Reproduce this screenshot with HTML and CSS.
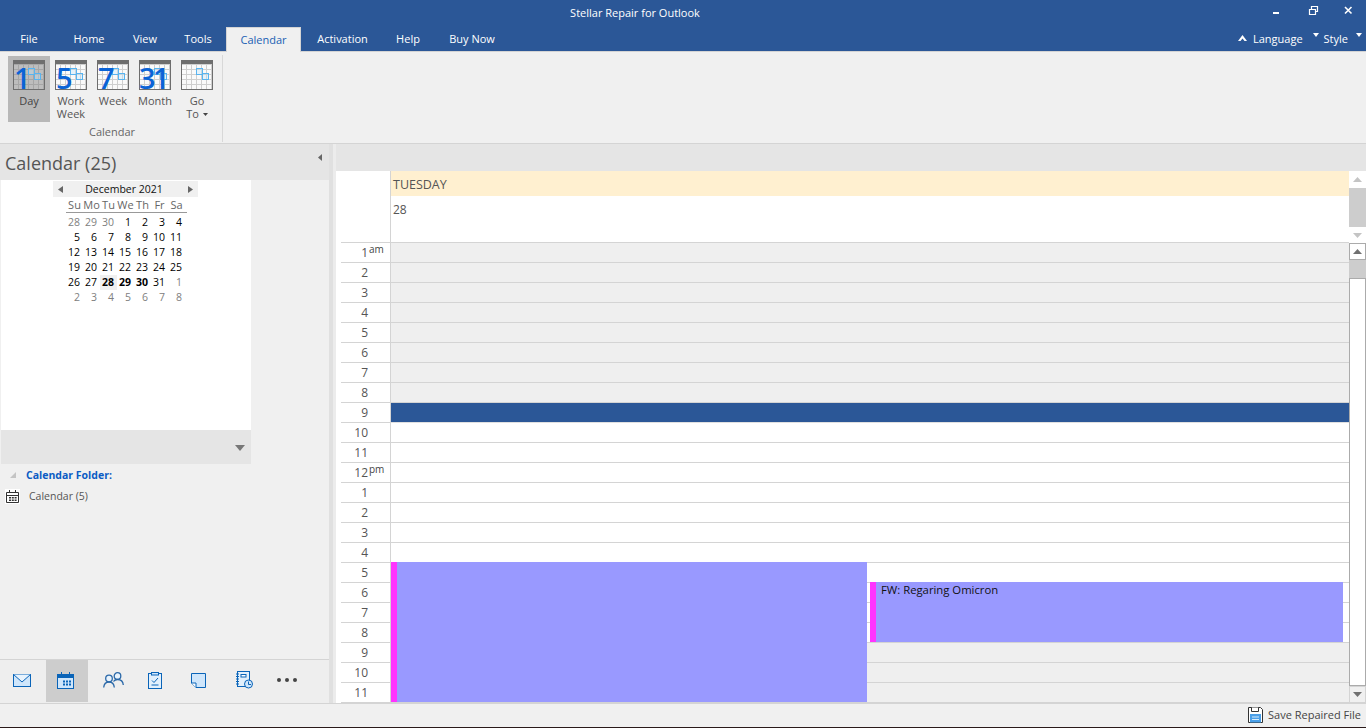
FILE: index.html
```html
<!DOCTYPE html>
<html lang="en">
<head>
<meta charset="utf-8">
<title>Stellar Repair for Outlook</title>
<link rel="stylesheet" href="styles.css">
</head>
<body>
<div class="app">
  <header class="chrome">
    <div class="titlebar">
      <div class="title">Stellar Repair for Outlook</div>
      <div class="winbtns">
        <svg class="winbtn" width="36" height="20" viewBox="0 0 36 20"><rect x="15" y="12" width="6" height="2" fill="#fff"/></svg>
        <svg class="winbtn" width="36" height="20" viewBox="0 0 36 20"><path d="M15.5 9.5h6v5h-6zM17.500 9.500v-3h6v5h-2" fill="none" stroke="#fff" stroke-width="1.200"/></svg>
        <svg class="winbtn" width="36" height="20" viewBox="0 0 36 20"><path d="M15 7l6.500 6.500M21.500 7L15 13.500" fill="none" stroke="#fff" stroke-width="1.600"/></svg>
      </div>
    </div>
    <div class="tabrow">
      <nav class="tabs">
        <span class="tab">File</span>
        <span class="tab">Home</span>
        <span class="tab">View</span>
        <span class="tab">Tools</span>
        <span class="tab tab-active">Calendar</span>
        <span class="tab">Activation</span>
        <span class="tab">Help</span>
        <span class="tab">Buy Now</span>
      </nav>
      <div class="tabtools">
        <svg class="caret-up" width="9" height="6" viewBox="0 0 9 6"><path d="M0 6L4.500 0 9 6H6.500L4.500 3.400 2.500 6z" fill="#fff"/></svg>
        <span class="tool-lang">Language</span>
        <svg class="caret-a" width="6" height="4" viewBox="0 0 6 4"><path d="M0 0h6L3 4z" fill="#fff"/></svg>
        <span class="tool-style">Style</span>
        <svg class="caret-b" width="6" height="4" viewBox="0 0 6 4"><path d="M0 0h6L3 4z" fill="#fff"/></svg>
      </div>
    </div>
  </header>

  <section class="ribbon">
    <div class="rgroup">
      <div class="rbtns">
        <div class="rbtn rbtn-on">
          <div class="calicon"><span class="sq1"></span><span class="sq2"></span><span class="digit">1</span></div>
          <span class="rlabel">Day</span>
        </div>
        <div class="rbtn">
          <div class="calicon"><span class="sq1"></span><span class="sq2"></span><span class="digit">5</span></div>
          <span class="rlabel">Work<br>Week</span>
        </div>
        <div class="rbtn">
          <div class="calicon"><span class="sq1"></span><span class="sq2"></span><span class="digit">7</span></div>
          <span class="rlabel">Week</span>
        </div>
        <div class="rbtn">
          <div class="calicon"><span class="sq1"></span><span class="sq2"></span><span class="digit digit-wide">31</span></div>
          <span class="rlabel">Month</span>
        </div>
        <div class="rbtn">
          <div class="calicon"><span class="sq1"></span><span class="sq2"></span></div>
          <span class="rlabel">Go<br>To <svg class="smallcaret" width="5" height="3" viewBox="0 0 5 3"><path d="M0 0h5L2.500 3z" fill="#444"/></svg></span>
        </div>
      </div>
      <div class="rgroup-label">Calendar</div>
    </div>
  </section>

  <main class="main">
    <aside class="left">
      <div class="left-head">
        <span class="left-title">Calendar (25)</span>
        <svg class="collapse" width="4" height="7" viewBox="0 0 4 7"><path d="M4 0v7L0 3.500z" fill="#666"/></svg>
      </div>
      <div class="left-upper">
        <div class="picker">
          <div class="minical">
            <div class="mc-head">
              <svg width="5" height="7" viewBox="0 0 5 7"><path d="M5 0v7L0 3.500z" fill="#666"/></svg>
              <span class="mc-month">December 2021</span>
              <svg width="5" height="7" viewBox="0 0 5 7"><path d="M0 0v7l5-3.500z" fill="#666"/></svg>
            </div>
            <div class="mc-week">
              <span>Su</span><span>Mo</span><span>Tu</span><span>We</span><span>Th</span><span>Fr</span><span>Sa</span>
            </div>
            <div class="mc-days">
              <span class="off">28</span><span class="off">29</span><span class="off">30</span><span>1</span><span>2</span><span>3</span><span>4</span>
              <span>5</span><span>6</span><span>7</span><span>8</span><span>9</span><span>10</span><span>11</span>
              <span>12</span><span>13</span><span>14</span><span>15</span><span>16</span><span>17</span><span>18</span>
              <span>19</span><span>20</span><span>21</span><span>22</span><span>23</span><span>24</span><span>25</span>
              <span>26</span><span>27</span><span class="bold today">28</span><span class="bold">29</span><span class="bold">30</span><span>31</span><span class="off">1</span>
              <span class="off">2</span><span class="off">3</span><span class="off">4</span><span class="off">5</span><span class="off">6</span><span class="off">7</span><span class="off">8</span>
            </div>
          </div>
        </div>
        <div class="picker-foot">
          <svg width="10" height="6" viewBox="0 0 10 6"><path d="M0 0h10L5 6z" fill="#777"/></svg>
        </div>
      </div>
      <div class="folders">
        <div class="folder-head">
          <svg width="6" height="6" viewBox="0 0 6 6"><path d="M6 0v6H0z" fill="#c4c4c4"/></svg>
          <span>Calendar Folder:</span>
        </div>
        <div class="folder-item">
          <svg class="folder-icon" width="15" height="15" viewBox="0 0 15 15">
            <rect width="15" height="15" fill="#fff"/>
            <path d="M1.500 3.500h12v10h-12zM1.500 6.500h12M4.500 1v3M10.500 1v3" fill="none" stroke="#333" stroke-width="1"/>
            <path d="M4 8h2v1.500H4zM6.800 8h2v1.500h-2zM9.600 8h2v1.500h-2zM4 10.500h2V12H4zM6.800 10.500h2V12h-2zM9.600 10.500h2V12h-2z" fill="#333"/>
          </svg>
          <span>Calendar (5)</span>
        </div>
      </div>
      <div class="navbar">
        <div class="nav nav-mail">
          <svg width="18" height="13" viewBox="0 0 18 13"><rect x=".5" y=".5" width="17" height="12" fill="#cfe6fb" stroke="#0a64b8"/><path d="M.5 .5L9 8l8.500-7.500" fill="#e8f3fd" stroke="#0a64b8"/></svg>
        </div>
        <div class="nav nav-on">
          <svg width="17" height="17" viewBox="0 0 17 17"><rect x=".5" y="2.500" width="16" height="14" fill="#cfe6fb" stroke="#0a64b8"/><path d="M0 2h17v4H0zM4 0h1v3H4zM12 0h1v3h-1z" fill="#0a64b8"/><path d="M6 8.500h2v2H6zM9 8.500h2v2H9zM12 8.500h2v2h-2zM6 11.500h2v2H6zM9 11.500h2v2H9zM12 11.500h2v2h-2z" fill="#0a64b8"/></svg>
        </div>
        <div class="nav nav-people">
          <svg width="21" height="16" viewBox="0 0 21 16"><circle cx="6" cy="6.500" r="3.300" fill="#e8f3fd" stroke="#2a68a8" stroke-width="1.300"/><path d="M.7 15.500C1 11.500 3 10 6 10s5 1.500 5.300 5.500" fill="none" stroke="#2a68a8" stroke-width="1.300"/><circle cx="14.500" cy="4" r="3.300" fill="#e8f3fd" stroke="#2a68a8" stroke-width="1.300"/><path d="M10.500 9.500C11.500 8 13 7.500 14.500 7.500c3 0 5.500 1.500 5.800 5.500" fill="none" stroke="#2a68a8" stroke-width="1.300"/></svg>
        </div>
        <div class="nav nav-task">
          <svg width="14" height="17" viewBox="0 0 14 17"><rect x=".5" y="1.500" width="13" height="15" fill="#e2f0fc" stroke="#0a64b8"/><rect x="3.500" y=".5" width="7" height="2.500" fill="#cfe6fb" stroke="#0a64b8"/><path d="M4 8.500l2 2 4-4.500M3.500 13h7" fill="none" stroke="#0a64b8"/></svg>
        </div>
        <div class="nav nav-note">
          <svg width="15" height="15" viewBox="0 0 15 15"><path d="M.5 .5h14v14H5L.5 10z" fill="#cfe6fb" stroke="#0a64b8"/><path d="M.5 10H5v4.500" fill="#fff" stroke="#0a64b8"/></svg>
        </div>
        <div class="nav nav-journal">
          <svg width="17" height="18" viewBox="0 0 17 18"><rect x="1.500" y=".5" width="12" height="15" fill="#e2f0fc" stroke="#0a64b8"/><path d="M0 3h3M0 5.500h3M0 8h3M0 10.500h3M0 13h3" stroke="#0a64b8"/><rect x="5" y="3.500" width="5" height="2.500" fill="#fff" stroke="#0a64b8"/><circle cx="12.500" cy="13" r="4" fill="#cfe6fb" stroke="#0a64b8"/><path d="M12.500 10.500V13.500H15" fill="none" stroke="#0a64b8"/></svg>
        </div>
        <div class="nav nav-more">
          <svg width="20" height="4" viewBox="0 0 20 4"><circle cx="2" cy="2" r="2" fill="#444"/><circle cx="10" cy="2" r="2" fill="#444"/><circle cx="18" cy="2" r="2" fill="#444"/></svg>
        </div>
      </div>
    </aside>

    <div class="splitter"></div>

    <section class="cal">
      <div class="cal-band"></div>
      <div class="dayhead">
        <div class="dayhead-gutter"></div>
        <div class="dayhead-main">
          <div class="dayname">TUESDAY</div>
          <div class="daynum">28</div>
        </div>
        <div class="sb sb-top">
          <div class="sb-btn"><svg width="9" height="5" viewBox="0 0 9 5"><path d="M0 5L4.500 0 9 5z" fill="#c4c4c4"/></svg></div>
          <div class="sb-track"></div>
          <div class="sb-btn"><svg width="9" height="5" viewBox="0 0 9 5"><path d="M0 0h9L4.500 5z" fill="#c4c4c4"/></svg></div>
        </div>
      </div>
      <div class="body">
        <div class="hours">
          <div class="row shade"><div class="hr"><b>1</b><i>am</i></div><div class="slot"></div></div>
          <div class="row shade"><div class="hr"><b>2</b><i></i></div><div class="slot"></div></div>
          <div class="row shade"><div class="hr"><b>3</b><i></i></div><div class="slot"></div></div>
          <div class="row shade"><div class="hr"><b>4</b><i></i></div><div class="slot"></div></div>
          <div class="row shade"><div class="hr"><b>5</b><i></i></div><div class="slot"></div></div>
          <div class="row shade"><div class="hr"><b>6</b><i></i></div><div class="slot"></div></div>
          <div class="row shade"><div class="hr"><b>7</b><i></i></div><div class="slot"></div></div>
          <div class="row shade"><div class="hr"><b>8</b><i></i></div><div class="slot"></div></div>
          <div class="row sel"><div class="hr"><b>9</b><i></i></div><div class="slot"></div></div>
          <div class="row"><div class="hr"><b>10</b><i></i></div><div class="slot"></div></div>
          <div class="row"><div class="hr"><b>11</b><i></i></div><div class="slot"></div></div>
          <div class="row"><div class="hr"><b>12</b><i>pm</i></div><div class="slot"></div></div>
          <div class="row"><div class="hr"><b>1</b><i></i></div><div class="slot"></div></div>
          <div class="row"><div class="hr"><b>2</b><i></i></div><div class="slot"></div></div>
          <div class="row"><div class="hr"><b>3</b><i></i></div><div class="slot"></div></div>
          <div class="row"><div class="hr"><b>4</b><i></i></div><div class="slot"></div></div>
          <div class="row"><div class="hr"><b>5</b><i></i></div><div class="slot"></div></div>
          <div class="row"><div class="hr"><b>6</b><i></i></div><div class="slot"></div></div>
          <div class="row"><div class="hr"><b>7</b><i></i></div><div class="slot"></div></div>
          <div class="row"><div class="hr"><b>8</b><i></i></div><div class="slot"></div></div>
          <div class="row shade"><div class="hr"><b>9</b><i></i></div><div class="slot"></div></div>
          <div class="row shade"><div class="hr"><b>10</b><i></i></div><div class="slot"></div></div>
          <div class="row shade"><div class="hr"><b>11</b><i></i></div><div class="slot"></div></div>
          <div class="event event-a"></div>
          <div class="event event-b"><span>FW: Regaring Omicron</span></div>
        </div>
        <div class="sb sb-main">
          <div class="sb-btn sb-btn-b"><svg width="9" height="5" viewBox="0 0 9 5"><path d="M0 5L4.500 0 9 5z" fill="#707070"/></svg></div>
          <div class="sb-gap"></div>
          <div class="sb-thumb"></div>
          <div class="sb-btn sb-btn-c"><svg width="9" height="5" viewBox="0 0 9 5"><path d="M0 0h9L4.500 5z" fill="#707070"/></svg></div>
        </div>
      </div>
    </section>
  </main>

  <footer class="status">
    <svg width="15" height="16" viewBox="0 0 15 16"><path d="M.5 .5h12l2 2v13H.5z" fill="#fff" stroke="#333"/><path d="M3.500 .5v4h7v-4" fill="#fff" stroke="#333"/><rect x="2" y="7" width="11" height="8.500" fill="#4a9fe8"/><path d="M4 10h7M4 12.500h7" stroke="#d6ecfb"/></svg>
    <span>Save Repaired File</span>
  </footer>
</div>
</body>
</html>
```
FILE: styles.css
```css
* { box-sizing: border-box; }
html, body { margin: 0; padding: 0; height: 100%; overflow: hidden; }
body { font-family: "Open Sans", "Noto Sans", sans-serif; font-size: 11px; color: #444; background: #f0f0f0; }
.app { width: 1366px; height: 728px; display: flex; flex-direction: column; }

.chrome { height: 52px; background: #2b5797; color: #fff; flex: none; border-bottom: 1px solid #d4d4d4; }
.titlebar { height: 27px; display: flex; position: relative; justify-content: center; padding-right: 96px; }
.title { line-height: 25px; font-size: 11px; }
.winbtns { position: absolute; right: 0; top: 0; display: flex; }
.winbtn { display: block; width: 36px; height: 20px; }
.tabrow { height: 24px; display: flex; justify-content: space-between; }
.tabs { display: grid; grid-template-columns: 58px 62px 50px 56px 75px 83px 48px 80px; height: 25px; }
.tab { text-align: center; line-height: 24px; font-size: 11px; }
.tab-active { background: #f0f0f0; color: #1a5fb4; border: 1px solid #d4d4d4; border-bottom: 0; line-height: 23px; }
.tabtools { display: flex; align-items: center; padding: 0 4px 2px 0; font-size: 11px; }
.caret-up { margin-right: 6px; }
.tool-lang { margin-right: 10px; }
.caret-a { margin: 0 5px 6px 0; }
.tool-style { margin-right: 8px; }
.caret-b { margin-bottom: 6px; }

.ribbon { height: 92px; flex: none; background: #f0f0f0; border-bottom: 1px solid #d4d4d4; padding: 3px 0 1px 1px; display: flex; }
.rgroup { width: 222px; padding-left: 7px; border-right: 1px solid #d8d8d8; display: flex; flex-direction: column; }
.rbtns { display: flex; height: 66px; margin-top: 1px; }
.rbtn { width: 42px; display: flex; flex-direction: column; align-items: center; padding-top: 4px; }
.rbtn-on { background: #b8b8b8; }
.rlabel { text-align: center; line-height: 13px; margin-top: 4px; color: #555; font-size: 11px; }
.rbtn-on .rlabel { color: #444; }
.smallcaret { vertical-align: 2px; margin-left: 1px; }
.calicon {
  position: relative; width: 32px; height: 30px; flex: none;
  border: 1px solid #6e6e6e; border-top: 4px solid #6e6e6e;
  background-color: #fafafa;
  background-image: repeating-linear-gradient(90deg, transparent 0 4px, #cfcfcf 4px 5px), repeating-linear-gradient(0deg, transparent 0 4px, #cfcfcf 4px 5px);
}
.rbtn-on .calicon {
  background-color: #bdbdbd;
  background-image: repeating-linear-gradient(90deg, transparent 0 4px, #a6a6a6 4px 5px), repeating-linear-gradient(0deg, transparent 0 4px, #a6a6a6 4px 5px);
}
.sq1, .sq2 { position: absolute; border: 1px solid #58b4f0; background: rgba(190, 225, 250, .35); }
.sq1 { left: 14px; top: 4px; width: 7px; height: 7px; }
.sq2 { left: 20px; top: 9px; width: 7px; height: 7px; }
.digit { position: absolute; left: 0; top: 2px; font-size: 29px; line-height: 24px; font-weight: 600; color: #0a63d6; }
.digit-wide { left: -1px; letter-spacing: -2.500px; }
.rgroup-label { text-align: center; margin-top: 2px; line-height: 15px; color: #666; font-size: 11px; padding-right: 6px; }

.main { flex: 1; display: flex; min-height: 0; }
.left { width: 329px; flex: none; display: flex; flex-direction: column; background: #f0f0f0; }
.left-head { height: 36px; background: #e5e5e5; display: flex; align-items: center; justify-content: space-between; padding: 0 7px 0 5px; flex: none; }
.left-title { font-size: 18px; color: #555; padding-top: 2px; line-height: 28px; }
.collapse { margin-bottom: 10px; }
.left-upper { width: 250px; margin-left: 1px; flex: none; }
.picker { height: 250px; background: #fff; padding: 1px 0 0 52px; }
.minical { width: 145px; }
.mc-head { height: 16px; background: #f0f0f0; display: flex; align-items: center; justify-content: space-between; padding: 0 5px; color: #111; font-size: 10.500px; }
.mc-month { margin-right: 3px; }
.mc-week { display: grid; grid-template-columns: repeat(7, 17px); width: 121px; margin-left: 13px; height: 16px; border-bottom: 1px solid #999; text-align: center; line-height: 16px; color: #666; font-size: 11px; }
.mc-days { display: grid; grid-template-columns: repeat(7, 17px); grid-auto-rows: 15px; margin-left: 13px; margin-top: 2px; color: #000; line-height: 15px; font-size: 10.500px; }
.mc-days span { text-align: right; padding-right: 3px; }
.mc-days .off { color: #808080; }
.mc-days .bold { font-weight: 700; }
.mc-days .today { background: #f0f0f0; }
.picker-foot { height: 34px; background: #e5e5e5; display: flex; align-items: center; justify-content: flex-end; padding: 2px 6px 0 0; }
.folders { flex: 1; padding-left: 5px; }
.folder-head { display: flex; align-items: center; height: 21px; color: #0a5bc4; font-weight: 700; font-size: 10.500px; }
.folder-head svg { margin: 1px 10px 0 5px; }
.folder-item { display: flex; align-items: center; height: 20px; color: #555; font-size: 10.500px; margin-top: 1px; }
.folder-icon { margin-right: 9px; }

.navbar { height: 44px; flex: none; border-top: 1px solid #d4d4d4; display: grid; grid-template-columns: 44px 2px 42px 50px 34px 52px 40px 46px; grid-template-rows: 42px; background: #eeeeee; width: 331px; }
.nav { display: flex; align-items: center; justify-content: center; padding-bottom: 2px; }
.nav-mail { grid-column: 1; }
.nav-on { grid-column: 3; background: #cdcdcd; padding-right: 4px; }
.nav-people { grid-column: 4; }
.nav-task { grid-column: 5; }
.nav-note { grid-column: 6; }
.nav-journal { grid-column: 7; }
.nav-more { grid-column: 8; }

.splitter { width: 7px; flex: none; background: linear-gradient(90deg, #e0e0e0 0 4px, #ececec 4px); }
.cal { flex: 1; display: flex; flex-direction: column; min-width: 0; }
.cal-band { height: 27px; background: #e5e5e5; flex: none; }
.dayhead { height: 72px; flex: none; display: flex; background: #fff; }
.dayhead-gutter { width: 55px; border-right: 1px solid #d4d4d4; flex: none; background: linear-gradient(#d4d4d4, #d4d4d4) 5px 100% / 100% 1px no-repeat; }
.dayhead-main { flex: 1; border-bottom: 1px solid #d4d4d4; }
.dayname { height: 25px; background: #fff0d0; line-height: 27px; padding-left: 2px; font-size: 12.500px; color: #555; }
.daynum { line-height: 27px; padding-left: 2px; font-size: 12px; color: #555; }
.sb { width: 17px; flex: none; display: flex; flex-direction: column; }
.sb-btn { height: 17px; display: flex; align-items: center; justify-content: center; background: #fff; }
.sb-track { flex: 1; background: #cdcdcd; }
.sb-top .sb-btn:last-child { height: 16px; }
.body { flex: 1; display: flex; min-height: 0; }
.hours { flex: 1; position: relative; padding-left: 5px; background: #fff; }
.row { height: 20px; display: flex; }
.hr { width: 50px; flex: none; display: flex; justify-content: flex-end; border-bottom: 1px solid #d4d4d4; border-right: 1px solid #d4d4d4; color: #555; font-size: 12px; line-height: 19px; }
.hr b { font-weight: 400; }
.hr i { font-style: normal; width: 22px; flex: none; font-size: 10px; line-height: 13px; color: #444; padding-left: 1px; }
.slot { flex: 1; border-bottom: 1px solid #d4d4d4; }
.shade .slot { background: #efefef; }
.sel .slot { background: #2b5797; border-bottom-color: #e0e0e0; }
.event { position: absolute; background: #9999ff; border-left: 6px solid #ff33ff; color: #111; }
.event-a { left: 55px; top: 319px; width: 476px; height: 140px; }
.event-b { left: 534px; top: 339px; width: 473px; height: 60px; padding-left: 5px; font-size: 11.300px; line-height: 15px; }
.sb-main { background: #cdcdcd; }
.sb-btn-b { border: 1px solid #ababab; }
.sb-gap { height: 18px; flex: none; }
.sb-thumb { flex: 1; background: #fff; border: 1px solid #ababab; }
.sb-btn-c { border: 1px solid #d4d4d4; background: #f0f0f0; }

.status { height: 25px; flex: none; background: #f0f0f0; border-top: 1px solid #d4d4d4; border-bottom: 1px solid #2a1a1a; display: flex; align-items: center; justify-content: flex-end; gap: 5px; padding: 0 5px 2px 0; color: #444; font-size: 11px; }
```
